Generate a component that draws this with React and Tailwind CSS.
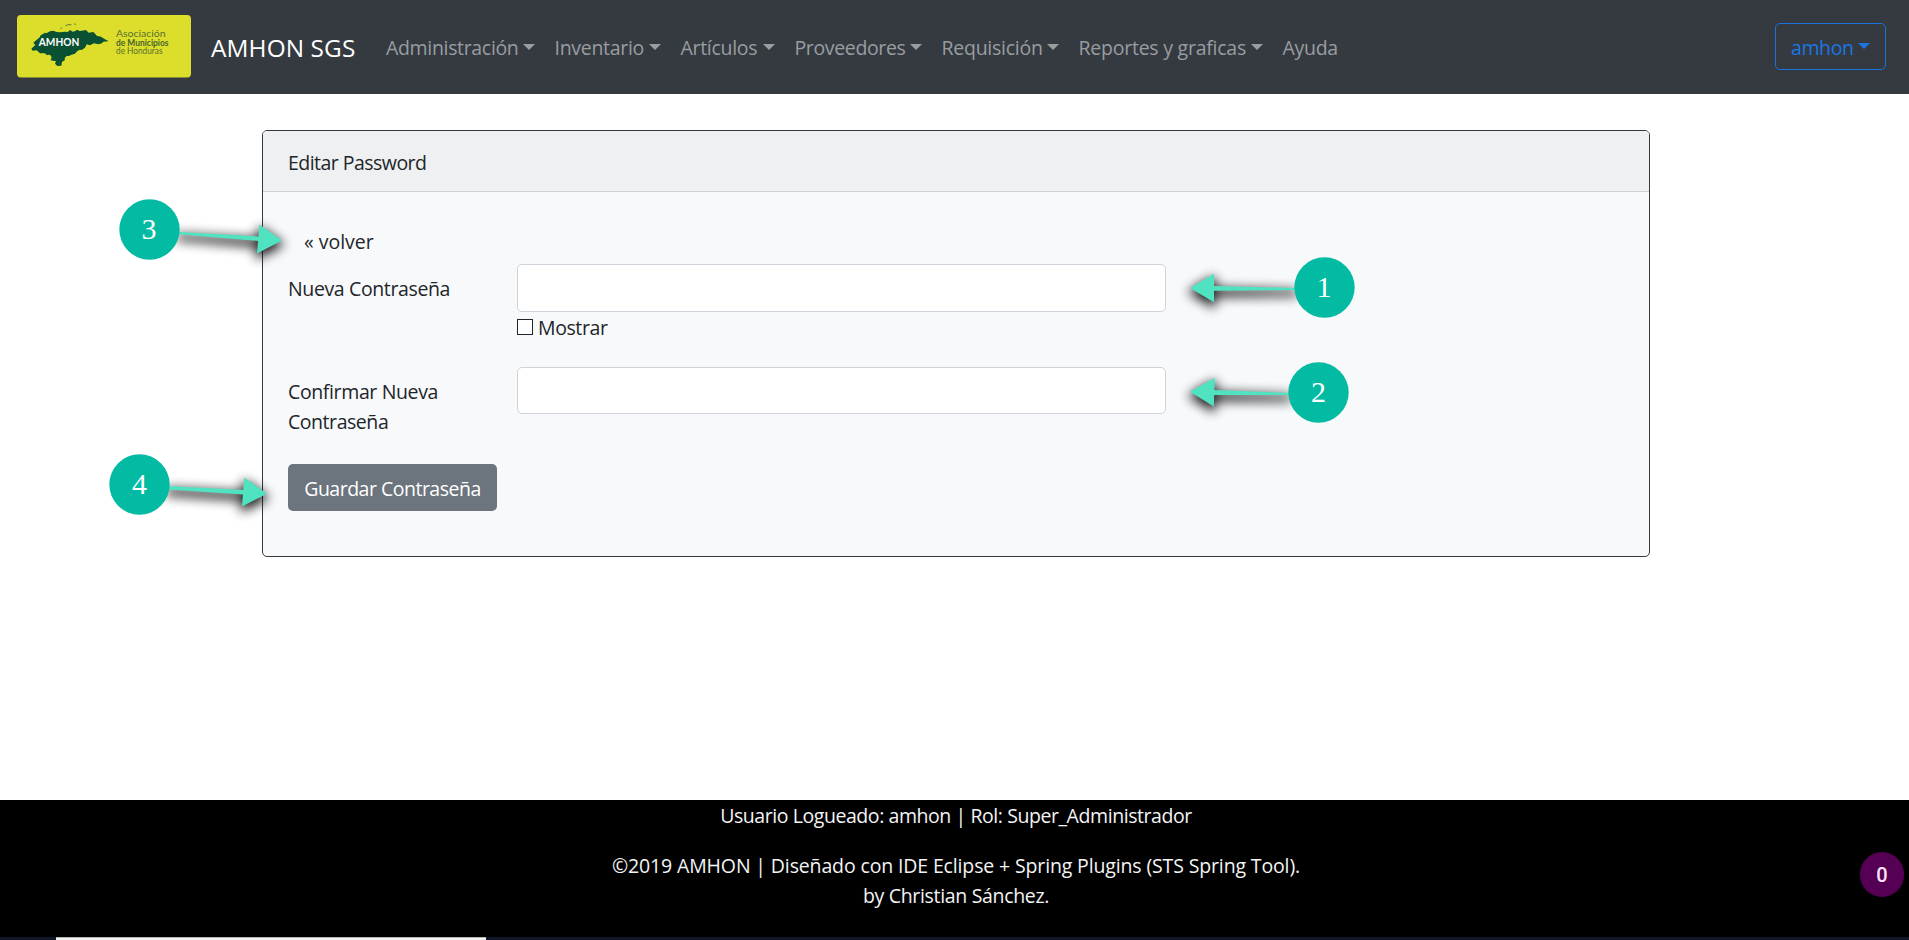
import React from "react";

const navItems = [
  { label: "Administración", width: "w-[168.5px]", tracking: "tracking-[-0.33px]" },
  { label: "Inventario", width: "w-[126px]", tracking: "tracking-[-0.3px]" },
  { label: "Artículos", width: "w-[114px]", tracking: "tracking-[-0.3px]" },
  { label: "Proveedores", width: "w-[147px]", tracking: "tracking-[-0.36px]" },
  { label: "Requisición", width: "w-[137px]", tracking: "tracking-[-0.25px]" },
  { label: "Reportes y graficas", width: "w-[204px]", tracking: "tracking-[-0.24px]" },
];

function Caret() {
  return (
    <svg className="mb-[2px] block h-[6px] w-[12px] shrink-0" viewBox="0 0 12 6" fill="currentColor">
      <path d="M0 0h12L6 6z" />
    </svg>
  );
}

function Logo() {
  return (
    <svg className="block h-[63px] w-[174px] shrink-0" viewBox="17 15 174 63">
      <rect x="17" y="15" width="174" height="62.500" rx="4" fill="#dcde2b" />
      <path
        fill="#0a5134"
        transform="scale(.33333)"
        d="M94 146L106 135L100 128L112 118L118 113L122 106L135 98L139 100L150 94L160 92L170 96L180 97L195 95L203 96L210 90L218 95L224 94L232 89L238 93L245 92L258 90L266 98L280 96L288 104L290 107L303 110L315 118L326 124L310 125L306 130L295 133L282 130L270 136L260 133L255 143L245 150L240 149L232 153L225 161L212 165L208 168L200 168L194 174L195 180L186 186L184 197L172 198L165 191L168 184L152 181L155 172L150 164L140 165L135 160L120 160L110 151L98 152Z"
      />
      <path fill="none" stroke="#55723a" strokeWidth="0.9" d="M60.500 28.500l1.500-.7M65.500 25.700l2.500-1 3.500.1M74 23.700l1.800.8" />
      <text x="38.800" y="46.100" fill="#fff" fontFamily="Lato, sans-serif" fontWeight="700" fontSize="10.500" textLength="40.500" lengthAdjust="spacingAndGlyphs">AMHON</text>
      <g fill="#59702f" fontFamily="Lato, sans-serif">
        <text x="116" y="37" fontSize="9.500" textLength="49.500" lengthAdjust="spacingAndGlyphs">Asociación</text>
        <text x="116" y="45.700" fontSize="8.800" fontWeight="700" fill="#46652f" textLength="52.500" lengthAdjust="spacingAndGlyphs">de Municipios</text>
        <text x="116" y="54" fontSize="8.600" textLength="46.500" lengthAdjust="spacingAndGlyphs">de Honduras</text>
      </g>
    </svg>
  );
}

const callouts = [
  { n: "1", cx: 1324.5, cy: 287.5, tx: 1324, shaft: "1213,286 1296,288 1296,290 1213,290.7", head: "1190,288 1214,273.700 1214,302.300" },
  { n: "2", cx: 1318.5, cy: 392.5, tx: 1318.5, shaft: "1213,390 1290,393 1290,395 1213,395", head: "1190,391.700 1214.800,377.800 1213.800,406.500" },
  { n: "3", cx: 149.5, cy: 229.5, tx: 149, shaft: "178,232 259,236.500 259,241 178,234.200", head: "282,240.500 259.500,224.500 257,253.400" },
  { n: "4", cx: 139.5, cy: 484.5, tx: 139.5, shaft: "168,486 244,490 244,494.500 168,489.500", head: "267,493.700 244.300,477.500 242,506.500" },
];

function Callouts() {
  return (
    <svg className="pointer-events-none absolute left-0 top-0 h-[940px] w-[1909px]" viewBox="0 0 1909 940">
      <defs>
        <filter id="soft" filterUnits="userSpaceOnUse" x="0" y="0" width="1909" height="940">
          <feGaussianBlur stdDeviation="6" />
        </filter>
      </defs>
      {callouts.map((c) => (
        <g key={c.n}>
          <g filter="url(#soft)" opacity="0.9" transform="translate(0 4)" stroke="#000" strokeLinejoin="round">
            <polygon points={c.shaft} strokeWidth="4" />
            <polygon points={c.head} strokeWidth="3" />
          </g>
          <polygon points={c.shaft} fill="#50e3c2" />
          <polygon points={c.head} fill="#50e3c2" />
          <circle cx={c.cx} cy={c.cy} r="30.200" fill="#03bba2" />
          <text x={c.tx} y={c.cy + 9.6} textAnchor="middle" fill="#fff" fontFamily="'Liberation Serif', serif" fontSize="30">
            {c.n}
          </text>
        </g>
      ))}
    </svg>
  );
}

export default function App() {
  return (
    <div className="relative flex h-[940px] w-[1909px] flex-col overflow-hidden bg-white font-['Open_Sans',sans-serif] text-[19.5px] leading-[30px] text-[#212529]">
      <nav className="flex h-[94px] shrink-0 items-center bg-[#343a40] pl-[17px] pr-[23px] text-[#9a9da0]">
        <div className="flex h-full items-center pb-[1px]">
          <Logo />
        </div>
        <span className="ml-[20px] w-[165px] whitespace-nowrap pt-[2px] text-[24.4px] tracking-[0.1px] text-white">AMHON SGS</span>
        <ul className="flex pt-[2px]">
          {navItems.map((item) => (
            <li key={item.label} className={`flex items-center justify-between px-[10px] ${item.width}`}>
              <span className={`whitespace-nowrap ${item.tracking}`}>{item.label}</span>
              <Caret />
            </li>
          ))}
          <li className="px-[10px] tracking-[-0.3px]">Ayuda</li>
        </ul>
        <button className="mb-[1px] ml-auto flex h-[47px] w-[111px] items-center justify-between rounded-[5px] border border-[#1b73d9] px-[15px] text-[#1b76e3]">
          <span className="pt-[2px] tracking-[-0.4px]">amhon</span>
          <Caret />
        </button>
      </nav>

      <main className="flex-1 pl-[262px] pt-[36px]">
        <section className="h-[427px] w-[1388px] overflow-hidden rounded-[5px] border border-[#343a40] bg-[#f8f9fb]">
          <header className="h-[61px] border-b border-[#cfd1d3] bg-[#eff0f2] px-[25px] pt-[17px] tracking-[-0.53px]">Editar Password</header>
          <form className="flex flex-col px-[25px] pt-[35px]">
            <a className="block h-[37px] pl-[16px]">« volver</a>
            <div className="flex h-[103px]">
              <label className="w-[229px] pt-[10px] tracking-[-0.37px]">Nueva Contraseña</label>
              <div className="w-[649px]">
                <input type="password" className="block h-[48px] w-full rounded-[5px] border border-[#ced4da] bg-white" />
                <label className="flex h-[30px] items-center">
                  <input type="checkbox" className="mb-[1px] size-[16px] appearance-none border border-[#212529] bg-white" />
                  <span className="ml-[5px] pt-px tracking-[-0.4px]">Mostrar</span>
                </label>
              </div>
            </div>
            <div className="flex h-[97px]">
              <label className="w-[229px] pt-[10px]">
                <span className="block tracking-[-0.37px]">Confirmar Nueva</span>
                <span className="block tracking-[-0.45px]">Contraseña</span>
              </label>
              <input type="password" className="block h-[47px] w-[649px] rounded-[5px] border border-[#ced4da] bg-white" />
            </div>
            <button type="button" className="h-[47px] w-[209px] whitespace-nowrap rounded-[5px] bg-[#6c757d] pt-[3px] text-center tracking-[-0.5px] text-white">
              Guardar Contraseña
            </button>
          </form>
        </section>
      </main>

      <footer className="h-[137px] shrink-0 bg-black pl-[3px] pt-px text-center text-[#f4f4f4]">
        <p className="mb-[20px] tracking-[-0.43px]">Usuario Logueado: amhon | Rol: Super_Administrador</p>
        <p className="tracking-[-0.14px]">©2019 AMHON | Diseñado con IDE Eclipse + Spring Plugins (STS Spring Tool).</p>
        <p className="tracking-[-0.33px]">by Christian Sánchez.</p>
      </footer>
      <div className="h-[3px] shrink-0 bg-[#10182a] pl-[56px]">
        <div className="h-full w-[430px] border-t border-[#b5b5b5] bg-[#f3f3f3]" />
      </div>

      <div className="absolute left-[1860px] top-[852px] flex h-[45px] w-[44px] items-center justify-center rounded-full bg-[#550055] font-['Roboto',sans-serif] text-[20px] font-medium text-[#fbe6fb]">
        0
      </div>
      <Callouts />
    </div>
  );
}
